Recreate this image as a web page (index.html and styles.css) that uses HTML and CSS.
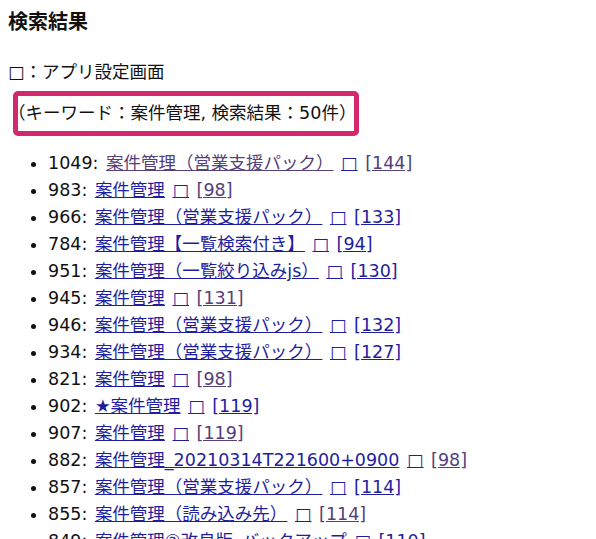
FILE: index.html
```html
<!DOCTYPE html>
<html lang="ja">
<head>
  <meta charset="utf-8">
  <title>検索結果</title>
  <link rel="stylesheet" href="styles.css">
</head>
<body>
  <h2 class="title">検索結果</h2>
  <p class="legend">□：アプリ設定画面</p>
  <p class="query"><span class="mark">（キーワード：案件管理, 検索結果：50件）</span></p>

  <ul class="results">
    <li>1049: <a href="#a1049" class="seen">案件管理（営業支援パック）</a> <a href="#s1049">□</a> <a href="#v1049" class="seen">[144]</a></li>
    <li>983: <a href="#a983">案件管理</a> <a href="#s983">□</a> <a href="#v983" class="seen">[98]</a></li>
    <li>966: <a href="#a966">案件管理（営業支援パック）</a> <a href="#s966">□</a> <a href="#v966">[133]</a></li>
    <li>784: <a href="#a784">案件管理【一覧検索付き】</a> <a href="#s784">□</a> <a href="#v784">[94]</a></li>
    <li>951: <a href="#a951">案件管理（一覧絞り込みjs）</a> <a href="#s951">□</a> <a href="#v951">[130]</a></li>
    <li>945: <a href="#a945">案件管理</a> <a href="#s945">□</a> <a href="#v945" class="seen">[131]</a></li>
    <li>946: <a href="#a946">案件管理（営業支援パック）</a> <a href="#s946">□</a> <a href="#v946">[132]</a></li>
    <li>934: <a href="#a934">案件管理（営業支援パック）</a> <a href="#s934">□</a> <a href="#v934">[127]</a></li>
    <li>821: <a href="#a821">案件管理</a> <a href="#s821">□</a> <a href="#v821" class="seen">[98]</a></li>
    <li>902: <a href="#a902">★案件管理</a> <a href="#s902">□</a> <a href="#v902">[119]</a></li>
    <li>907: <a href="#a907">案件管理</a> <a href="#s907">□</a> <a href="#v907" class="seen">[119]</a></li>
    <li>882: <a href="#a882">案件管理_20210314T221600+0900</a> <a href="#s882">□</a> <a href="#v882" class="seen">[98]</a></li>
    <li>857: <a href="#a857">案件管理（営業支援パック）</a> <a href="#s857">□</a> <a href="#v857">[114]</a></li>
    <li>855: <a href="#a855">案件管理（読み込み先）</a> <a href="#s855">□</a> <a href="#v855" class="seen">[114]</a></li>
    <li>849: <a href="#a849">案件管理②改良版_バックアップ</a> <a href="#s849">□</a> <a href="#v849">[110]</a></li>
  </ul>
</body>
</html>
```

FILE: styles.css
```css
* {
    box-sizing: border-box;
}

body {
    margin: 8px 8px 7px;
    background: #fff;
    color: #111;
    font-family: "DejaVu Sans", "Noto Sans CJK JP", sans-serif;
    font-size: 17.5px;
    line-height: 27px;
}

.title {
    margin: 0;
    font-size: 20px;
    line-height: 28px;
    font-weight: bold;
}

.legend {
    margin: 23px 0 0;
}

.query {
    margin: 14px 0 0;
}

/* pink frame drawn over the query line */
.mark {
    position: relative;
}

.mark::after {
    content: "";
    position: absolute;
    left: 5px;
    right: -3px;
    top: -12px;
    bottom: -13px;
    border: 5px solid #d2286c;
    border-radius: 5px;
}

.results {
    margin: 23px 0 0;
    padding-left: 40px;
    word-spacing: 2px;
}

.results li {
    height: 27px;
}

.results a {
    color: #1e1e9e;
    word-spacing: 0;
}

.results a.seen {
    color: #54407a;
}
```
